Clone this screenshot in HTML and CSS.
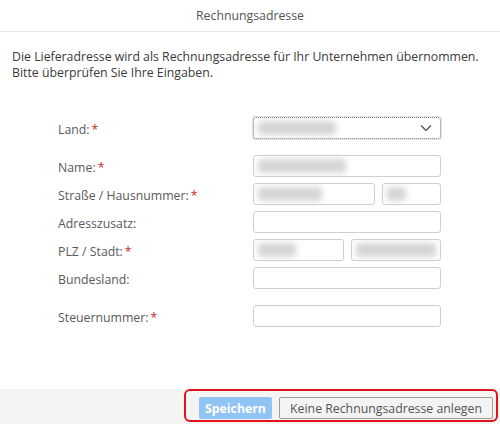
FILE: index.html
```html
<!DOCTYPE html>
<html lang="de">
<head>
<meta charset="utf-8">
<title>Rechnungsadresse</title>
<link rel="stylesheet" href="styles.css">
</head>
<body>
<div class="dialog">
  <div class="header">Rechnungsadresse</div>
  <p class="intro">Die Lieferadresse wird als Rechnungsadresse für Ihr Unternehmen übernommen.<br>Bitte überprüfen Sie Ihre Eingaben.</p>
  <div class="form">
    <div class="row">
      <label class="label">Land:<span class="req">*</span></label>
      <div class="field select"><span class="blur w78"></span>
        <svg class="chev" width="12" height="8" viewBox="0 0 12 8"><path d="M1 1.5 L6 6.5 L11 1.5" fill="none" stroke="#444" stroke-width="1.1"/></svg>
      </div>
    </div>
    <div class="row gap">
      <label class="label">Name:<span class="req">*</span></label>
      <div class="field"><span class="blur w88"></span></div>
    </div>
    <div class="row">
      <label class="label">Straße / Hausnummer:<span class="req">*</span></label>
      <div class="split street">
        <div class="field"><span class="blur w64"></span></div>
        <div class="field"><span class="blur w19"></span></div>
      </div>
    </div>
    <div class="row">
      <label class="label">Adresszusatz:</label>
      <div class="field"></div>
    </div>
    <div class="row">
      <label class="label">PLZ / Stadt:<span class="req">*</span></label>
      <div class="split plz">
        <div class="field"><span class="blur w38"></span></div>
        <div class="field"><span class="blur w80"></span></div>
      </div>
    </div>
    <div class="row">
      <label class="label">Bundesland:</label>
      <div class="field"></div>
    </div>
    <div class="row gap">
      <label class="label">Steuernummer:<span class="req">*</span></label>
      <div class="field"></div>
    </div>
  </div>
  <div class="footer">
    <div class="highlight">
      <button class="btn primary">Speichern</button>
      <button class="btn secondary">Keine Rechnungsadresse anlegen</button>
    </div>
  </div>
</div>
</body>
</html>
```

FILE: styles.css
```css
html, body {
  margin: 0;
  padding: 0;
  background: #fff;
}
body {
  font-family: "Open Sans", "Noto Sans", sans-serif;
  font-size: 12.3px;
  color: #333;
}
.dialog {
  width: 500px;
  height: 424px;
  display: flex;
  flex-direction: column;
}
.header {
  height: 32px;
  line-height: 31px;
  border-bottom: 1px solid #e6e6e6;
  text-align: center;
  color: #555;
  font-size: 12.3px;
  box-sizing: border-box;
}
.intro {
  margin: 17px 0 0 12px;
  line-height: 15.5px;
  color: #3a3a3a;
}
.form {
  margin: 37px 0 0 58px;
  display: flex;
  flex-direction: column;
  gap: 6px;
}
.row {
  display: flex;
  align-items: center;
  height: 22px;
}
.row.gap {
  margin-top: 10px;
}
.label {
  width: 195px;
  color: #5a5a5a;
  padding-top: 3px;
}
.req {
  color: #d2232a;
  margin-left: 2px;
}
.field {
  box-sizing: border-box;
  width: 188px;
  height: 22px;
  border: 1px solid #cfcfcf;
  border-radius: 3px;
  background: #fff;
  display: flex;
  align-items: center;
  padding-left: 4px;
}
.select {
  border: 1px dotted #777;
  box-shadow: 0 0 0 1px #e2e2e2;
  justify-content: space-between;
  padding-right: 8px;
}
.chev {
  display: block;
}
.split {
  display: flex;
  gap: 7px;
  width: 188px;
}
.street .field:first-child { width: 122px; }
.street .field:last-child { width: 59px; }
.plz .field { width: 91px; }
.blur {
  display: block;
  height: 14px;
  background: #d4d4d4;
  border-radius: 3px;
  filter: blur(3px);
}
.w78 { width: 78px; }
.w88 { width: 88px; }
.w64 { width: 64px; }
.w19 { width: 19px; }
.w38 { width: 38px; }
.w80 { width: 80px; }
.footer {
  margin-top: auto;
  height: 35px;
  background: #f4f4f3;
  display: flex;
  justify-content: flex-end;
  align-items: flex-start;
  padding-right: 2px;
}
.highlight {
  box-sizing: border-box;
  height: 33px;
  border: 2px solid #e0141e;
  border-radius: 6px;
  display: flex;
  align-items: flex-start;
  gap: 7px;
  padding: 6px 3px 0 13px;
}
.btn {
  box-sizing: border-box;
  height: 22px;
  font-family: "Open Sans", "Noto Sans", sans-serif;
  font-size: 12.3px;
  padding: 0;
  border-radius: 2px;
  cursor: pointer;
  white-space: nowrap;
}
.primary {
  width: 73px;
  background: #8fc4f4;
  border: 1px solid #8fc4f4;
  color: #fff;
  font-weight: bold;
}
.secondary {
  width: 214px;
  background: #f3f3f3;
  border: 1px solid #9d9d9d;
  color: #555;
}
```
